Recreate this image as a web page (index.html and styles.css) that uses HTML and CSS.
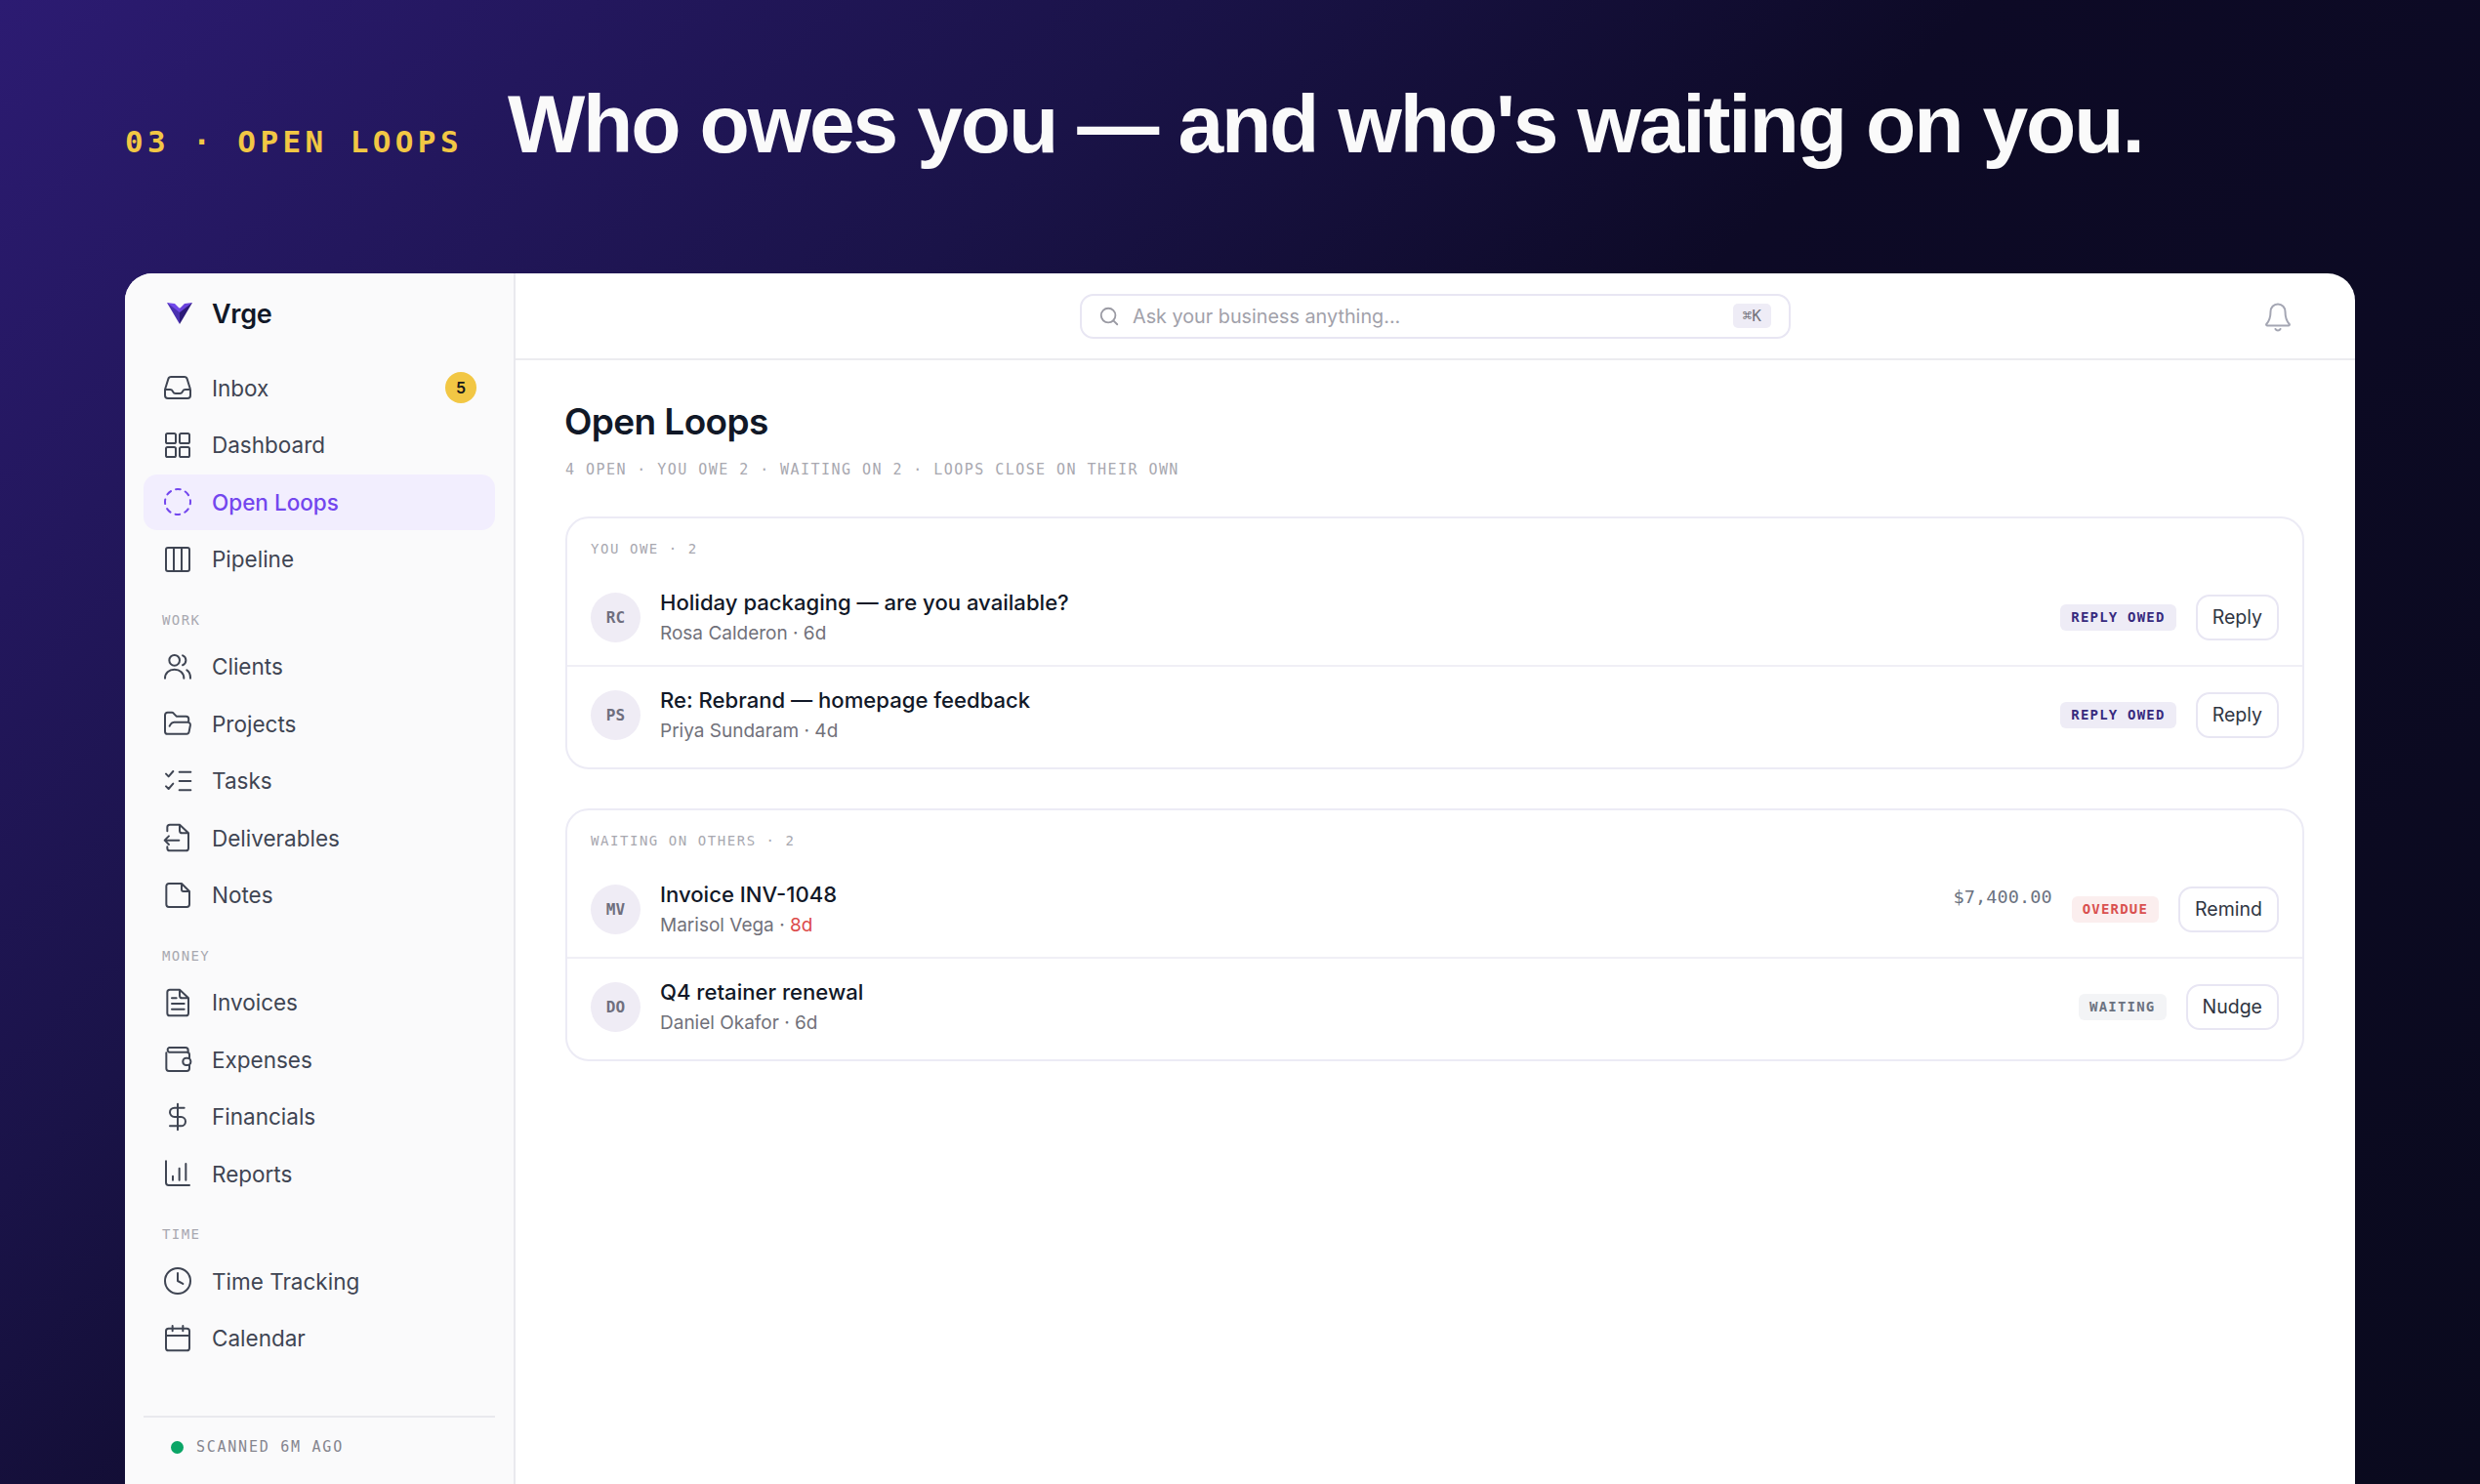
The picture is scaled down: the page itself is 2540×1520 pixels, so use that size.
FILE: index.html
```html
<!DOCTYPE html>
<html lang="en">
<head>
  <meta charset="UTF-8" />
  <title>Vrge - Open Loops</title>
  <link rel="stylesheet" href="styles.css">
</head>
<body>

  <header class="hero">
    <div class="hero-eyebrow">03 · OPEN LOOPS</div>
    <h1 class="hero-title">Who owes you — and who's waiting on you.</h1>
  </header>

  <div class="app-window">

    <aside class="sidebar">
      <div class="brand">
        <svg class="brand-logo" viewBox="0 0 26 22">
          <path d="M0 0 L13 6 L13 22 Z" fill="#4a30b0"/>
          <path d="M26 0 L13 6 L13 22 Z" fill="#2c1a78"/>
          <path d="M0 0 L8 1 L13 6 L13 10 Z" fill="#7148ea"/>
          <path d="M26 0 L18 1 L13 6 L13 10 Z" fill="#6a42dc"/>
        </svg>
        <span class="brand-name">Vrge</span>
      </div>

      <nav class="nav">
        <a class="nav-item">
          <svg class="nav-icon" viewBox="0 0 24 24"><path d="M2.25 13.5h3.86a2.25 2.25 0 0 1 2.01 1.24l.26.52a2.25 2.25 0 0 0 2.01 1.24h3.22a2.25 2.25 0 0 0 2.01-1.24l.26-.52a2.25 2.25 0 0 1 2.01-1.24h3.86M2.25 13.84V18a2.25 2.25 0 0 0 2.25 2.25h15A2.25 2.25 0 0 0 21.75 18v-4.16c0-.22-.03-.45-.1-.66L19.24 5.34a2.25 2.25 0 0 0-2.15-1.59H6.91a2.25 2.25 0 0 0-2.15 1.59L2.35 13.18a2.25 2.25 0 0 0-.1.66Z"/></svg>
          Inbox
          <span class="nav-count">5</span>
        </a>
        <a class="nav-item">
          <svg class="nav-icon" viewBox="0 0 24 24"><rect x="3" y="3" width="7.5" height="7.5" rx="1.2"/><rect x="13.5" y="3" width="7.5" height="7.5" rx="1.2"/><rect x="3" y="13.5" width="7.5" height="7.5" rx="1.2"/><rect x="13.5" y="13.5" width="7.5" height="7.5" rx="1.2"/></svg>
          Dashboard
        </a>
        <a class="nav-item active">
          <svg class="nav-icon" viewBox="0 0 24 24"><circle cx="12" cy="12" r="9.75" stroke-dasharray="3.6 4.06" stroke-dashoffset="1.8"/></svg>
          Open Loops
        </a>
        <a class="nav-item">
          <svg class="nav-icon" viewBox="0 0 24 24"><rect x="3" y="3" width="18" height="18" rx="1.5"/><path d="M9 3v18M15 3v18"/></svg>
          Pipeline
        </a>

        <div class="nav-label">WORK</div>
        <a class="nav-item">
          <svg class="nav-icon" viewBox="0 0 24 24"><circle cx="9.5" cy="7" r="4"/><path d="M2.25 20.75c0-4 3-6.75 7.25-6.75s7.25 2.75 7.25 6.75M15.8 3.3a4 4 0 0 1 0 7.4M19 14.5c1.7 1 2.75 3.2 2.75 6.25"/></svg>
          Clients
        </a>
        <a class="nav-item">
          <svg class="nav-icon" viewBox="0 0 24 24"><path d="M20.4 10V8.5a2 2 0 0 0-2-2H11L8.6 4a1.5 1.5 0 0 0-1-.4H4.25a2 2 0 0 0-2 2v12.5a2 2 0 0 0 2 2H18.8a2 2 0 0 0 1.9-1.6l1-5.2a2 2 0 0 0-2-2.3H9.3a3 3 0 0 0-2.7 1.6L5.7 14"/></svg>
          Projects
        </a>
        <a class="nav-item">
          <svg class="nav-icon" viewBox="0 0 24 24"><path d="M13.25 5H22M13.25 12H22M13.25 19H22M3 6.5l2 2 3.5-4M3 16l2 2 3.5-4"/></svg>
          Tasks
        </a>
        <a class="nav-item">
          <svg class="nav-icon" viewBox="0 0 24 24"><path d="M4 7V4a2 2 0 0 1 2-2h7.5l6.75 6.5V20a2 2 0 0 1-2 2H6a2 2 0 0 1-2-2v-1M13.5 2v4.5A2 2 0 0 0 15.5 8.5h4.75M13 14H2m3.2-3.2L2 14l3.2 3.2"/></svg>
          Deliverables
        </a>
        <a class="nav-item">
          <svg class="nav-icon" viewBox="0 0 24 24"><path d="M5.25 3H15l6 6v10a2 2 0 0 1-2 2H5.25a2 2 0 0 1-2-2V5a2 2 0 0 1 2-2ZM15 3v4.5A1.5 1.5 0 0 0 16.5 9H21"/></svg>
          Notes
        </a>

        <div class="nav-label">MONEY</div>
        <a class="nav-item">
          <svg class="nav-icon" viewBox="0 0 24 24"><path d="M6 2h7.5l6.75 6.5V20a2 2 0 0 1-2 2H6a2 2 0 0 1-2-2V4a2 2 0 0 1 2-2ZM13.5 2v4.5a2 2 0 0 0 2 2h4.75M7.5 8.5h3.5M7.5 12.8h9.5M7.5 17h9.5"/></svg>
          Invoices
        </a>
        <a class="nav-item">
          <svg class="nav-icon" viewBox="0 0 24 24"><path d="M3.25 7V19a2 2 0 0 0 2 2H19a2 2 0 0 0 2-2v-2.5M21 11V8.5a2 2 0 0 0-2-2H5.25a2 2 0 0 1 0-3.5H18a2 2 0 0 1 2 2v1.5"/><rect x="16" y="11" width="6" height="5.5" rx="2.5"/></svg>
          Expenses
        </a>
        <a class="nav-item">
          <svg class="nav-icon" viewBox="0 0 24 24"><path d="M12 2v20M17 5H9.5a3.5 3.5 0 0 0 0 7h5a3.5 3.5 0 0 1 0 7H6"/></svg>
          Financials
        </a>
        <a class="nav-item">
          <svg class="nav-icon" viewBox="0 0 24 24"><path d="M3 2.5V19a2 2 0 0 0 2 2h16M8.25 14v3M13.25 8v9M18.25 4.5V17"/></svg>
          Reports
        </a>

        <div class="nav-label">TIME</div>
        <a class="nav-item">
          <svg class="nav-icon" viewBox="0 0 24 24"><circle cx="12" cy="12" r="9.75"/><path d="M12 6v6l4 2.2"/></svg>
          Time Tracking
        </a>
        <a class="nav-item">
          <svg class="nav-icon" viewBox="0 0 24 24"><rect x="3" y="4.25" width="18" height="17" rx="2"/><path d="M3 9.75h18M8 2.25v4M16 2.25v4"/></svg>
          Calendar
        </a>
      </nav>

      <div class="sidebar-footer">
        <span class="status-dot"></span>
        SCANNED 6M AGO
      </div>
    </aside>

    <main class="main">
      <div class="topbar">
        <div class="search-bar">
          <svg class="search-icon" viewBox="0 0 24 24"><circle cx="11" cy="11" r="8"/><path d="M21 21l-4.3-4.3"/></svg>
          <span class="search-text">Ask your business anything...</span>
          <span class="kbd">⌘K</span>
        </div>
        <svg class="bell" viewBox="0 0 26 30"><path d="M13 1.5c-4.4 0-7.5 3.4-7.5 7.8 0 6-1.2 9.4-4.2 12.7-.5.6-.1 1.5.6 1.5h22.2c.7 0 1.1-.9.6-1.5-3-3.3-4.2-6.7-4.2-12.7 0-4.4-3.1-7.8-7.5-7.8ZM10.5 27c.5 1 1.4 1.5 2.5 1.5s2-.5 2.5-1.5"/></svg>
      </div>

      <div class="content">
        <h2 class="page-title">Open Loops</h2>
        <div class="page-sub">4 OPEN · YOU OWE 2 · WAITING ON 2 · LOOPS CLOSE ON THEIR OWN</div>

        <section class="card">
          <div class="card-label">YOU OWE · 2</div>
          <div class="row">
            <div class="avatar">RC</div>
            <div class="row-text">
              <div class="row-title">Holiday packaging — are you available?</div>
              <div class="row-sub">Rosa Calderon · 6d</div>
            </div>
            <span class="badge badge-owed">REPLY OWED</span>
            <button class="btn">Reply</button>
          </div>
          <div class="row">
            <div class="avatar">PS</div>
            <div class="row-text">
              <div class="row-title">Re: Rebrand — homepage feedback</div>
              <div class="row-sub">Priya Sundaram · 4d</div>
            </div>
            <span class="badge badge-owed">REPLY OWED</span>
            <button class="btn">Reply</button>
          </div>
        </section>

        <section class="card">
          <div class="card-label">WAITING ON OTHERS · 2</div>
          <div class="row">
            <div class="avatar">MV</div>
            <div class="row-text">
              <div class="row-title">Invoice INV-1048</div>
              <div class="row-sub">Marisol Vega · <span class="late">8d</span></div>
            </div>
            <span class="amount">$7,400.00</span>
            <span class="badge badge-overdue">OVERDUE</span>
            <button class="btn">Remind</button>
          </div>
          <div class="row">
            <div class="avatar">DO</div>
            <div class="row-text">
              <div class="row-title">Q4 retainer renewal</div>
              <div class="row-sub">Daniel Okafor · 6d</div>
            </div>
            <span class="badge badge-waiting">WAITING</span>
            <button class="btn">Nudge</button>
          </div>
        </section>
      </div>
    </main>

  </div>

</body>
</html>
```

FILE: styles.css
```css
body, html {
  margin: 0;
  padding: 0;
  height: 100%;
  overflow: hidden;
}

body {
  display: flex;
  flex-direction: column;
  height: 1520px;
  font-family: Inter, "Noto Sans", sans-serif;
  background: linear-gradient(135deg, #2c1b72 0%, #1a1348 30%, #0d0a26 50%, #0a0a1e 100%);
}

.hero {
  height: 280px;
  box-sizing: border-box;
  padding: 75px 128px 0;
  display: flex;
  align-items: baseline;
  gap: 46px;
}

.hero-eyebrow {
  font-family: "DejaVu Sans Mono", monospace;
  font-weight: bold;
  font-size: 31px;
  letter-spacing: 4.4px;
  color: #f2c744;
}

.hero-title {
  margin: 0;
  font-family: "Liberation Sans", Arial, sans-serif;
  font-size: 84px;
  line-height: 104px;
  font-weight: bold;
  letter-spacing: -2.15px;
  color: #fafafa;
}

.app-window {
  flex: 1;
  display: flex;
  margin: 0 128px;
  background-color: white;
  border-radius: 28px 28px 0 0;
  overflow: hidden;
}

/* sidebar */
.sidebar {
  width: 400px;
  box-sizing: border-box;
  padding: 0 19px;
  display: flex;
  flex-direction: column;
  background-color: #fafafb;
  border-right: 2px solid #e9e9ee;
}

.brand {
  height: 82px;
  margin-bottom: 6.5px;
  padding-left: 24px;
  display: flex;
  align-items: center;
}

.brand-logo {
  width: 26px;
  height: 22px;
  margin-right: 20px;
}

.brand-name {
  font-size: 27px;
  font-weight: 600;
  color: #111827;
  letter-spacing: -0.3px;
}

.nav {
  display: flex;
  flex-direction: column;
  gap: 1.5px;
}

.nav-item {
  height: 57px;
  padding: 0 19px;
  display: flex;
  align-items: center;
  gap: 19px;
  border-radius: 14px;
  font-size: 22.5px;
  color: #3f4553;
}

.nav-item.active {
  background-color: #f2eefe;
  color: #7346ee;
  font-weight: 500;
}

.nav-icon {
  width: 32px;
  height: 32px;
  flex-shrink: 0;
  fill: none;
  stroke: currentColor;
  stroke-width: 1.5;
  stroke-linecap: round;
  stroke-linejoin: round;
}

.nav-count {
  margin-left: auto;
  width: 32px;
  height: 32px;
  border-radius: 50%;
  background-color: #f2c744;
  color: #18181b;
  font-size: 16px;
  font-weight: 600;
  display: flex;
  justify-content: center;
  align-items: center;
}

.nav-label {
  padding: 24px 0 10px 19px;
  font-family: "DejaVu Sans Mono", monospace;
  font-size: 14px;
  line-height: 16px;
  letter-spacing: 1.4px;
  color: #a8a8b0;
}

.sidebar-footer {
  margin-top: auto;
  height: 70px;
  box-sizing: border-box;
  padding: 0 0 8px 28px;
  display: flex;
  align-items: center;
  gap: 13px;
  border-top: 2px solid #e9e9ee;
  font-family: "DejaVu Sans Mono", monospace;
  font-size: 15px;
  letter-spacing: 1.75px;
  color: #85858e;
}

.status-dot {
  width: 13px;
  height: 13px;
  border-radius: 50%;
  background-color: #0aa566;
}

/* main */
.main {
  flex: 1;
  display: flex;
  flex-direction: column;
}

.topbar {
  height: 89px;
  flex-shrink: 0;
  box-sizing: border-box;
  position: relative;
  display: flex;
  justify-content: center;
  align-items: center;
  border-bottom: 2px solid #ececf0;
}

.search-bar {
  width: 728px;
  height: 46px;
  box-sizing: border-box;
  padding: 0 18px 0 17px;
  display: flex;
  align-items: center;
  gap: 13px;
  border: 2px solid #e8e6f3;
  border-radius: 14px;
}

.search-icon {
  width: 22px;
  height: 22px;
  fill: none;
  stroke: #9a9aa3;
  stroke-width: 2;
  stroke-linecap: round;
}

.search-text {
  flex: 1;
  font-size: 19.8px;
  color: #a1a1aa;
}

.kbd {
  height: 25px;
  padding: 0 10px;
  display: flex;
  align-items: center;
  border-radius: 5px;
  background-color: #eeecf6;
  font-family: "DejaVu Sans Mono", monospace;
  font-size: 16px;
  color: #71717a;
}

.bell {
  position: absolute;
  top: 30px;
  right: 66px;
  width: 26px;
  height: 30px;
  fill: none;
  stroke: #a4a6b3;
  stroke-width: 2;
  stroke-linecap: round;
  stroke-linejoin: round;
}

.content {
  padding: 0 52px 0 51px;
}

.page-title {
  margin: 41px 0 0 -1px;
  font-size: 37px;
  line-height: 44px;
  font-weight: 600;
  letter-spacing: -0.6px;
  color: #111827;
}

.page-sub {
  margin: 17px 0 0;
  font-family: "DejaVu Sans Mono", monospace;
  font-size: 15px;
  line-height: 20px;
  letter-spacing: 1.45px;
  color: #a8a8b0;
}

.card {
  margin-top: 40px;
  padding-bottom: 5px;
  border: 2px solid #ecebf5;
  border-radius: 24px;
}

.page-sub + .card {
  margin-top: 38px;
}

.card-label {
  padding: 23px 24px 11px;
  font-family: "DejaVu Sans Mono", monospace;
  font-size: 14px;
  line-height: 16px;
  letter-spacing: 1.55px;
  color: #a8a8b0;
}

.row {
  height: 100px;
  box-sizing: border-box;
  padding: 0 24px;
  display: flex;
  align-items: center;
  border-top: 2px solid transparent;
}

.row + .row {
  border-top-color: #f0eff6;
}

.avatar {
  width: 51px;
  height: 51px;
  flex-shrink: 0;
  margin-right: 20px;
  border-radius: 50%;
  background-color: #efecf5;
  display: flex;
  justify-content: center;
  align-items: center;
  font-family: "DejaVu Sans Mono", monospace;
  font-size: 16px;
  font-weight: bold;
  color: #6f6f7e;
}

.row-text {
  flex: 1;
}

.row-title {
  font-size: 22.1px;
  line-height: 30px;
  font-weight: 450;
  color: #111827;
}

.row-sub {
  margin-top: 4px;
  font-size: 19px;
  line-height: 26px;
  color: #71717a;
}

.late {
  color: #dc4a4a;
}

.amount {
  margin: 0 20px 26px 0;
  font-family: "DejaVu Sans Mono", monospace;
  font-size: 18.5px;
  letter-spacing: 0.1px;
  color: #6b7280;
}

.badge {
  height: 27px;
  padding: 0 11px;
  margin-right: 20px;
  display: flex;
  align-items: center;
  border-radius: 6px;
  font-family: "DejaVu Sans Mono", monospace;
  font-size: 14px;
  font-weight: bold;
  letter-spacing: 1.2px;
}

.badge-owed {
  background-color: #eeecf6;
  color: #372a7e;
}

.badge-overdue {
  background-color: #fbeeee;
  color: #d9504f;
}

.badge-waiting {
  background-color: #f3f4f6;
  color: #6b7280;
}

.btn {
  height: 47px;
  padding: 0 15px;
  border: 2px solid #e8e6f3;
  border-radius: 14px;
  background-color: white;
  font-family: inherit;
  font-size: 19.5px;
  color: #2f3542;
}
```
